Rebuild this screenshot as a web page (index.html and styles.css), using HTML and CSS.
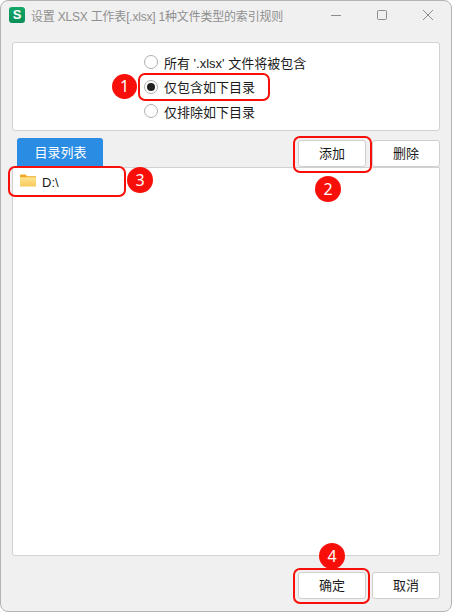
FILE: index.html
```html
<!DOCTYPE html>
<html lang="zh-CN">
<head>
    <meta charset="UTF-8">
    <meta name="viewport" content="width=device-width, initial-scale=1.0">
    <title>设置 XLSX 工作表</title>
    <link rel="stylesheet" href="styles.css">
</head>
<body>
    <div class="window">
        <div class="titlebar">
            <div class="app-icon">S</div>
            <div class="title">设置 XLSX 工作表[.xlsx] 1种文件类型的索引规则</div>
            <div class="win-controls">
                <svg width="12" height="12" viewBox="0 0 12 12"><path d="M1 6.5h10" stroke="#8c8c8c" fill="none"/></svg>
                <svg width="12" height="12" viewBox="0 0 12 12"><rect x="1.5" y="1.5" width="9" height="9" rx="1" stroke="#8c8c8c" fill="none"/></svg>
                <svg width="12" height="12" viewBox="0 0 12 12"><path d="M1 1l10 10M11 1L1 11" stroke="#8c8c8c" fill="none"/></svg>
            </div>
        </div>

        <div class="rule-panel">
            <label class="radio-row"><span class="radio"></span>所有 '.xlsx' 文件将被包含</label>
            <label class="radio-row"><span class="radio checked"></span>仅包含如下目录</label>
            <label class="radio-row"><span class="radio"></span>仅排除如下目录</label>
        </div>

        <div class="toolbar">
            <div class="tab">目录列表</div>
            <div class="btn-group">
                <div class="btn">添加</div>
                <div class="btn">删除</div>
            </div>
        </div>

        <div class="list-panel">
            <div class="list-item">
                <svg class="folder-icon" width="16" height="13" viewBox="0 0 17 13">
                    <defs>
                        <linearGradient id="folder" x1="0" y1="0" x2="0" y2="1">
                            <stop offset="0" stop-color="#fde58e"/>
                            <stop offset="1" stop-color="#f8c95c"/>
                        </linearGradient>
                    </defs>
                    <path d="M0 1a1 1 0 0 1 1-1h5l1.5 2H17v2H0z" fill="#f0a922"/>
                    <path d="M0 3h16a1 1 0 0 1 1 1v8a1 1 0 0 1-1 1H1a1 1 0 0 1-1-1z" fill="url(#folder)"/>
                </svg>
                <span>D:\</span>
            </div>
        </div>

        <div class="footer">
            <div class="btn">确定</div>
            <div class="btn">取消</div>
        </div>

        <!-- Red callouts on top of the dialog -->
        <div class="mark mark-radio"></div>
        <div class="mark mark-add"></div>
        <div class="mark mark-item"></div>
        <div class="mark mark-ok"></div>
        <div class="badge badge-1">1</div>
        <div class="badge badge-2">2</div>
        <div class="badge badge-3">3</div>
        <div class="badge badge-4">4</div>
    </div>
</body>
</html>
```

FILE: styles.css
```css
* {
    margin: 0;
    padding: 0;
    box-sizing: border-box;
}

body {
    width: 452px;
    height: 612px;
    overflow: hidden;
    background: #ffffff;
    font-family: "Liberation Sans", "Noto Sans CJK SC", sans-serif;
    font-size: 13px;
    color: #1a1a1a;
}

.window {
    position: relative;
    width: 452px;
    height: 612px;
    display: flex;
    flex-direction: column;
    padding: 0 11px;
    background: #f0f0f0;
    border: 1px solid #b4b4b4;
    border-radius: 8px;
}

.titlebar {
    height: 30px;
    margin: 0 -11px;
    padding: 0 17px 2px 8px;
    display: flex;
    align-items: center;
    flex-shrink: 0;
}

.app-icon {
    width: 16px;
    height: 16px;
    margin-right: 6px;
    border-radius: 3px;
    background: linear-gradient(#12a868, #0b8f58);
    color: #ffffff;
    font-size: 13px;
    font-weight: bold;
    line-height: 16px;
    text-align: center;
}

.title {
    flex: 1;
    color: #8f8f8f;
    font-size: 12px;
    letter-spacing: -0.2px;
    white-space: nowrap;
}

.win-controls {
    display: flex;
    gap: 34px;
}

.rule-panel {
    height: 89px;
    margin-top: 11px;
    padding-top: 7px;
    background: #ffffff;
    border: 1px solid #d2d2d2;
    border-radius: 3px;
    flex-shrink: 0;
}

.radio-row {
    height: 24.5px;
    padding-left: 131px;
    display: flex;
    align-items: center;
    gap: 6px;
}

.radio {
    width: 14px;
    height: 14px;
    border: 1px solid #b0b0b0;
    border-radius: 50%;
    background: #ffffff;
    display: flex;
    align-items: center;
    justify-content: center;
}

.radio.checked::after {
    content: "";
    width: 8px;
    height: 8px;
    border-radius: 50%;
    background: #222222;
}

.toolbar {
    height: 29px;
    margin-top: 7px;
    padding-left: 5px;
    display: flex;
    align-items: flex-end;
    justify-content: space-between;
    flex-shrink: 0;
}

.tab {
    width: 86px;
    height: 29px;
    padding-left: 1px;
    background: #2b8ce3;
    color: #ffffff;
    border-radius: 3px 3px 0 0;
    line-height: 29px;
    text-align: center;
}

.btn-group,
.footer {
    display: flex;
    gap: 6px;
}

.btn {
    width: 68px;
    height: 27px;
    background: #ffffff;
    border: 1px solid #cfcfcf;
    border-radius: 3px;
    line-height: 25px;
    text-align: center;
}

.list-panel {
    height: 389px;
    padding: 4px 7px;
    background: #ffffff;
    border: 1px solid #d2d2d2;
    border-radius: 0 0 3px 3px;
    flex-shrink: 0;
}

.list-item {
    display: flex;
    align-items: center;
    gap: 6px;
    height: 20px;
}

.folder-icon {
    margin-bottom: 3px;
}

.footer {
    margin-top: 16px;
    justify-content: flex-end;
}

.mark {
    position: absolute;
    border: 2px solid #f80f0a;
    border-radius: 7px;
}

.mark-radio {
    left: 137px;
    top: 72px;
    width: 132px;
    height: 28px;
}

.mark-add {
    left: 292px;
    top: 135px;
    width: 79px;
    height: 37px;
}

.mark-item {
    left: 7px;
    top: 165px;
    width: 118px;
    height: 31px;
}

.mark-ok {
    left: 292px;
    top: 567px;
    width: 77px;
    height: 36px;
}

.badge {
    position: absolute;
    width: 26px;
    height: 26px;
    border-radius: 50%;
    background: #f80f0a;
    color: #ffffff;
    font-family: "Noto Sans", sans-serif;
    font-size: 16px;
    line-height: 26px;
    text-align: center;
}

.badge-1 { left: 111px; top: 73px; width: 25px; height: 25px; line-height: 25px; }
.badge-2 { left: 314px; top: 175px; }
.badge-3 { left: 126px; top: 166px; }
.badge-4 { left: 318px; top: 542px; }
```
